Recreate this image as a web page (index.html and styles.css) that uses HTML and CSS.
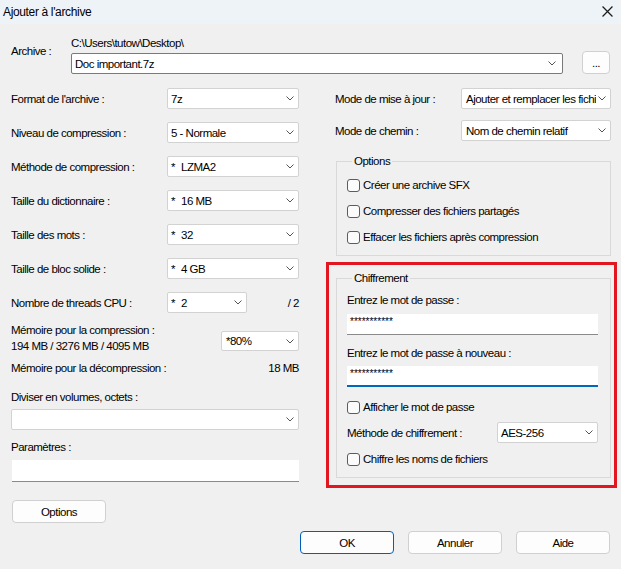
FILE: index.html
```html
<!DOCTYPE html>
<html lang="fr">
<head>
<meta charset="utf-8">
<title>Ajouter à l'archive</title>
<link rel="stylesheet" href="styles.css">
</head>
<body>
<div class="titlebar">
  <span class="title">Ajouter à l'archive</span>
  <svg class="close" viewBox="0 0 10 10" width="11" height="11"><path d="M0.5 0.5 L9.5 9.5 M9.5 0.5 L0.5 9.5" stroke="#1a1a1a" stroke-width="1.1" fill="none"/></svg>
</div>
<div class="content">
  <div class="archive">
    <div class="archive-label">Archive :</div>
    <div class="archive-fields">
      <div class="path">C:\Users\tutow\Desktop\</div>
      <div class="combo edit"><span>Doc important.7z</span><svg class="chev" viewBox="0 0 8 5" width="8" height="5"><path d="M0.5 0.5 L4 4 L7.5 0.5" stroke="#555" fill="none"/></svg></div>
    </div>
    <button class="btn dots">...</button>
  </div>

  <div class="main">
    <div class="left">
      <div class="row"><span class="lbl">Format de l'archive :</span><div class="combo sel"><span>7z</span><svg class="chev" viewBox="0 0 8 5" width="8" height="5"><path d="M0.5 0.5 L4 4 L7.5 0.5" stroke="#555" fill="none"/></svg></div></div>
      <div class="row"><span class="lbl">Niveau de compression :</span><div class="combo sel"><span>5 - Normale</span><svg class="chev" viewBox="0 0 8 5" width="8" height="5"><path d="M0.5 0.5 L4 4 L7.5 0.5" stroke="#555" fill="none"/></svg></div></div>
      <div class="row"><span class="lbl">Méthode de compression :</span><div class="combo sel"><span><span class="ast">*</span>LZMA2</span><svg class="chev" viewBox="0 0 8 5" width="8" height="5"><path d="M0.5 0.5 L4 4 L7.5 0.5" stroke="#555" fill="none"/></svg></div></div>
      <div class="row"><span class="lbl">Taille du dictionnaire :</span><div class="combo sel"><span><span class="ast">*</span>16 MB</span><svg class="chev" viewBox="0 0 8 5" width="8" height="5"><path d="M0.5 0.5 L4 4 L7.5 0.5" stroke="#555" fill="none"/></svg></div></div>
      <div class="row"><span class="lbl">Taille des mots :</span><div class="combo sel"><span><span class="ast">*</span>32</span><svg class="chev" viewBox="0 0 8 5" width="8" height="5"><path d="M0.5 0.5 L4 4 L7.5 0.5" stroke="#555" fill="none"/></svg></div></div>
      <div class="row"><span class="lbl">Taille de bloc solide :</span><div class="combo sel"><span><span class="ast">*</span>4 GB</span><svg class="chev" viewBox="0 0 8 5" width="8" height="5"><path d="M0.5 0.5 L4 4 L7.5 0.5" stroke="#555" fill="none"/></svg></div></div>
      <div class="row"><span class="lbl">Nombre de threads CPU :</span><div class="combo sel short"><span><span class="ast">*</span>2</span><svg class="chev" viewBox="0 0 8 5" width="8" height="5"><path d="M0.5 0.5 L4 4 L7.5 0.5" stroke="#555" fill="none"/></svg></div><span class="threads">/ 2</span></div>
      <div class="mem">
        <div class="mem-text">
          <div>Mémoire pour la compression :</div>
          <div>194 MB / 3276 MB / 4095 MB</div>
        </div>
        <div class="combo pct"><span>*80%</span><svg class="chev" viewBox="0 0 8 5" width="8" height="5"><path d="M0.5 0.5 L4 4 L7.5 0.5" stroke="#555" fill="none"/></svg></div>
      </div>
      <div class="decomp"><span>Mémoire pour la décompression :</span><span>18 MB</span></div>
      <div class="lbl-block split-lbl">Diviser en volumes, octets :</div>
      <div class="combo full"><span></span><svg class="chev" viewBox="0 0 8 5" width="8" height="5"><path d="M0.5 0.5 L4 4 L7.5 0.5" stroke="#555" fill="none"/></svg></div>
      <div class="lbl-block param-lbl">Paramètres :</div>
      <div class="textbox param"></div>
      <button class="btn options">Options</button>
    </div>

    <div class="right">
      <div class="rrow"><span class="lbl">Mode de mise à jour :</span><div class="combo rsel"><span class="clip">Ajouter et remplacer les fichiers</span><svg class="chev" viewBox="0 0 8 5" width="8" height="5"><path d="M0.5 0.5 L4 4 L7.5 0.5" stroke="#555" fill="none"/></svg></div></div>
      <div class="rrow second"><span class="lbl">Mode de chemin :</span><div class="combo rsel"><span>Nom de chemin relatif</span><svg class="chev" viewBox="0 0 8 5" width="8" height="5"><path d="M0.5 0.5 L4 4 L7.5 0.5" stroke="#555" fill="none"/></svg></div></div>

      <fieldset class="group opts">
        <legend>Options</legend>
        <label class="check"><span class="box"></span>Créer une archive SFX</label>
        <label class="check"><span class="box"></span>Compresser des fichiers partagés</label>
        <label class="check"><span class="box"></span>Effacer les fichiers après compression</label>
      </fieldset>

      <div class="highlight">
        <fieldset class="group enc">
          <legend>Chiffrement</legend>
          <div class="enc-lbl first">Entrez le mot de passe :</div>
          <div class="textbox pw">***********</div>
          <div class="enc-lbl second">Entrez le mot de passe à nouveau :</div>
          <div class="textbox pw focus">***********</div>
          <label class="check show"><span class="box"></span>Afficher le mot de passe</label>
          <div class="method"><span>Méthode de chiffrement :</span><div class="combo msel"><span>AES-256</span><svg class="chev" viewBox="0 0 8 5" width="8" height="5"><path d="M0.5 0.5 L4 4 L7.5 0.5" stroke="#555" fill="none"/></svg></div></div>
          <label class="check names"><span class="box"></span>Chiffre les noms de fichiers</label>
        </fieldset>
      </div>
    </div>
  </div>

  <div class="footer">
    <button class="btn foot ok">OK</button>
    <button class="btn foot">Annuler</button>
    <button class="btn foot">Aide</button>
  </div>
</div>
</body>
</html>
```

FILE: styles.css
```css
* { box-sizing: border-box; }
html, body { margin: 0; padding: 0; }
body {
  width: 621px;
  height: 569px;
  overflow: hidden;
  background: #f0f0f0;
  font: 11.5px/16px "Liberation Sans", Arial, sans-serif;
  letter-spacing: -0.5px;
  color: #000;
}
.titlebar {
  height: 24px;
  background: #eef3f8;
  display: flex;
  align-items: center;
  justify-content: space-between;
  padding: 0 8px 0 3px;
}
.title { font-size: 12px; letter-spacing: -0.35px; }
.close { display: block; margin-top: -1px; }
.content { padding-left: 11px; }

.archive { display: flex; margin-top: 11px; }
.archive-label { width: 60px; margin-top: 8px; }
.archive-fields { width: 492px; display: flex; flex-direction: column; gap: 2px; }
.path { height: 16px; }
.dots {
  width: 28px;
  height: 23px;
  margin-left: 19px;
  align-self: flex-end;
  padding: 0;
  font-size: 10px;
  line-height: 12px;
}

.combo {
  height: 21px;
  background: #fff;
  border: 1px solid #d2d2d2;
  border-radius: 2px;
  display: flex;
  align-items: center;
  justify-content: space-between;
  padding: 0 4px 0 3px;
  white-space: nowrap;
  overflow: hidden;
}
.combo.edit { border-color: #7a7a7a; padding-right: 6px; }
.chev { flex: none; display: block; }
.ast { margin-right: 6px; }
.clip { overflow: hidden; width: 130px; }

.main { display: flex; margin-top: 14px; }
.left { width: 288px; display: flex; flex-direction: column; }
.right { width: 276px; margin-left: 36px; display: flex; flex-direction: column; }

.row { height: 21px; display: flex; align-items: center; margin-bottom: 13px; }
.row:nth-child(7) { margin-bottom: 0; }
.lbl { flex: none; }
.row .lbl { width: 156px; }
.sel { width: 132px; }
.short { width: 80px; }
.threads { margin-left: auto; }

.mem { display: flex; justify-content: space-between; margin-top: 9px; height: 32px; }
.pct { width: 78px; margin-top: 9px; height: 20px; }
.pct span { margin-left: 1px; }
.decomp { display: flex; justify-content: space-between; margin-top: 6px; height: 16px; }
.split-lbl { margin-top: 13px; }
.full { margin-top: 4px; height: 21px; }
.param-lbl { margin-top: 9px; }
.textbox {
  background: #fff;
  border-bottom: 1px solid #8a8a8a;
}
.param { height: 22px; margin-top: 5px; margin-left: 1px; }

.btn {
  font: inherit;
  letter-spacing: inherit;
  color: #000;
  background: #fdfdfd;
  border: 1px solid #d0d0d0;
  border-radius: 4px;
  height: 23px;
  padding: 0;
}
.options { width: 94px; margin-top: 18px; margin-left: 1px; }

.rrow { height: 21px; display: flex; align-items: center; justify-content: space-between; }
.rrow.second { margin-top: 11px; }
.rsel { width: 150px; padding-left: 4px; }

.group {
  margin: 0 0 0 1px;
  border: 1px solid #d9d9d9;
  padding: 0 11px 10px 10px;
  min-width: 0;
}
.group legend {
  padding: 0 2px;
  margin-left: 5px;
  line-height: 16px;
}
.opts { margin-top: 12px; padding-bottom: 10px; }
.check { display: flex; align-items: center; height: 16px; margin-top: 10px; }
.opts .check:first-of-type { margin-top: 8px; }
.box {
  width: 13px;
  height: 13px;
  border: 1px solid #5c5c5c;
  border-radius: 3px;
  background: #fbfbfb;
  margin-right: 3px;
  flex: none;
}

.highlight {
  margin: 6px -6px 0 -9px;
  border: 3px solid #e3151f;
  padding: 5px 3px 7px 7px;
}
.highlight .group { margin-left: 0; padding-right: 12px; }
.enc-lbl { height: 16px; }
.enc-lbl.first { margin-top: 6px; }
.enc-lbl.second { margin-top: 10px; }
.pw {
  height: 21px;
  margin-top: 6px;
  padding-left: 3px;
  font-size: 10px;
  line-height: 15px;
  letter-spacing: 0;
}
.pw.focus { margin-top: 5px; border-bottom: 2px solid #0067c0; }
.check.show { margin-top: 12px; }
.method { display: flex; align-items: center; justify-content: space-between; height: 21px; margin-top: 7px; }
.msel { width: 101px; }
.check.names { margin-top: 8px; }

.footer { display: flex; justify-content: flex-end; gap: 14px; padding-right: 11px; margin-top: 8px; }
.foot { width: 94px; }
.ok { border-color: #005fb8; }
```
